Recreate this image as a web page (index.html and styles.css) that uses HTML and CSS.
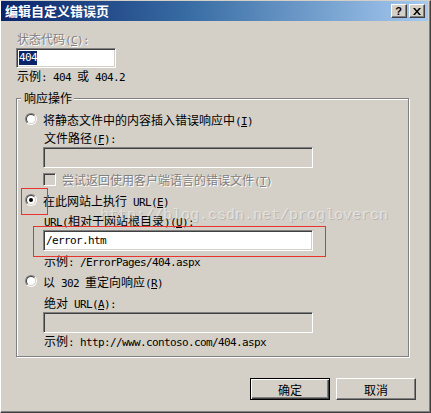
FILE: index.html
```html
<!DOCTYPE html>
<html>
<head>
<meta charset="utf-8">
<link rel="stylesheet" href="styles.css">
</head>
<body>
<div class="window">
  <div class="titlebar">
    <span class="title">编辑自定义错误页</span>
    <div class="caption-btns">
      <span class="cbtn help">?</span>
      <span class="cbtn close"><svg width="8" height="7" viewBox="0 0 8 7"><path d="M0 0h2l2 2.5 2-2.5h2l-3 3.5 3 3.5h-2l-2-2.5-2 2.5h-2l3-3.5z" fill="#000"/></svg></span>
    </div>
  </div>
  <div class="content">
    <div class="line disabled">状态代码<span class="a">(<u>C</u>):</span></div>
    <div class="edit code"><span class="sel a">404</span></div>
    <div class="line ex1">示例<span class="a">: 404 </span>或<span class="a"> 404.2</span></div>

    <fieldset class="group">
      <legend>响应操作</legend>
      <div class="group-body">
        <div class="opt">
          <span class="radio"><span class="radio-in"></span></span>
          <span>将静态文件中的内容插入错误响应中<span class="a">(<u>I</u>)</span></span>
        </div>
        <div class="sub">
          <div class="line lab1">文件路径<span class="a">(<u>F</u>):</span></div>
          <div class="edit wide off"></div>
          <div class="opt chk-row">
            <span class="check"></span>
            <span class="disabled">尝试返回使用客户端语言的错误文件<span class="a">(<u>T</u>)</span></span>
          </div>
        </div>

        <div class="opt opt2">
          <span class="radio"><span class="radio-in"><span class="dot"></span></span></span>
          <span>在此网站上执行<span class="a"> URL(<u>E</u>)</span></span>
        </div>
        <div class="sub">
          <div class="line lab2"><span class="a">URL(</span>相对于网站根目录<span class="a">)(<u>U</u>):</span></div>
          <div class="edit wide val"><span class="a">/error.htm</span></div>
          <div class="line ex2">示例<span class="a">: /ErrorPages/404.aspx</span></div>
        </div>

        <div class="opt opt3">
          <span class="radio"><span class="radio-in"></span></span>
          <span>以<span class="a"> 302 </span>重定向响应<span class="a">(<u>R</u>)</span></span>
        </div>
        <div class="sub">
          <div class="line lab3">绝对<span class="a"> URL(<u>A</u>):</span></div>
          <div class="edit wide off"></div>
          <div class="line ex3">示例<span class="a">: http://www.contoso.com/404.aspx</span></div>
        </div>
      </div>
    </fieldset>

    <div class="actions">
      <button class="btn default">确定</button>
      <button class="btn">取消</button>
    </div>
  </div>

  <div class="watermark">http://blog.csdn.net/proglovercn</div>
  <div class="mark mark1"></div>
  <div class="mark mark2"></div>
</div>
</body>
</html>
```

FILE: styles.css
```css
html, body {
  margin: 0;
  padding: 0;
  background: #d4d0c8;
}

body {
  font-family: "Noto Sans CJK SC", "Noto Sans", sans-serif;
  font-size: 12px;
  color: #000;
}

.window {
  position: relative;
  width: 431px;
  height: 413px;
  box-sizing: border-box;
  background: #d4d0c8;
  border-top: 1px solid #d4d0c8;
  border-left: 1px solid #fff;
  border-right: 1px solid #404040;
  border-bottom: 1px solid #404040;
  box-shadow: inset -1px -1px 0 #808080;
  overflow: hidden;
}

.titlebar {
  height: 20px;
  margin-right: 2px;
  display: flex;
  align-items: center;
  justify-content: space-between;
  background: linear-gradient(to right, #0a246a 0%, #3a6ea5 45%, #a6caf0 100%);
}

.title {
  color: #fff;
  font-weight: bold;
  font-size: 13px;
  line-height: 20px;
  padding-left: 4px;
}

.caption-btns {
  display: flex;
  gap: 2px;
  padding-right: 3px;
}

.cbtn {
  width: 16px;
  height: 14px;
  box-sizing: border-box;
  background: #d4d0c8;
  border: 1px solid;
  border-color: #fff #404040 #404040 #fff;
  box-shadow: inset -1px -1px 0 #808080;
  display: flex;
  align-items: center;
  justify-content: center;
}

.help {
  font-family: "Liberation Sans", sans-serif;
  font-weight: bold;
  font-size: 11px;
  line-height: 12px;
  padding-right: 1px;
}

.content {
  padding: 11px 14px 0 14px;
}

.line {
  line-height: 14px;
  height: 14px;
  white-space: nowrap;
}

.a {
  font-family: "DejaVu Sans Mono", "Liberation Mono", monospace;
  font-size: 11px;
  letter-spacing: -0.62px;
}

.disabled {
  color: #808080;
  text-shadow: 1px 1px 0 #fff;
}

.content > .line.disabled {
  padding-left: 2px;
}

.edit {
  box-sizing: border-box;
  border: 1px solid;
  border-color: #808080 #fff #fff #808080;
  box-shadow: inset 1px 1px 0 #404040, inset -1px -1px 0 #d4d0c8;
  background: #fff;
  display: flex;
  align-items: center;
  padding-left: 2px;
}

.code {
  width: 100px;
  height: 20px;
  margin-top: 2px;
  margin-left: 1px;
}

.sel {
  background: #0a246a;
  color: #fff;
  line-height: 14px;
}

.ex1 {
  margin-top: 1px;
  padding-left: 2px;
}

.group {
  margin: 8px 7px 0 1px;
  padding: 0;
  border: 1px solid #808080;
  box-shadow: 1px 1px 0 #fff, inset 1px 1px 0 #fff;
  min-width: 0;
}

.group legend {
  margin-left: 4px;
  padding: 0 2px 0 3px;
  line-height: 14px;
  background: #d4d0c8;
}

.group-body {
  padding: 7px 0 8px 8px;
}

.opt {
  display: flex;
  align-items: center;
  gap: 6px;
  height: 14px;
  white-space: nowrap;
}

.radio {
  width: 12px;
  height: 12px;
  box-sizing: border-box;
  border-radius: 50%;
  border: 1px solid;
  border-color: #808080 #fff #fff #808080;
  transform: rotate(0deg);
  display: flex;
}

.radio-in {
  flex: 1;
  border-radius: 50%;
  border: 1px solid;
  border-color: #404040 #d4d0c8 #d4d0c8 #404040;
  background: #fff;
  display: flex;
  align-items: center;
  justify-content: center;
}

.dot {
  width: 4px;
  height: 4px;
  border-radius: 50%;
  background: #000;
}

.sub {
  padding-left: 18px;
}

.lab1 {
  margin-top: 5px;
  padding-left: 1px;
}

.lab2 {
  margin-top: 7px;
  padding-left: 1px;
}

.lab3 {
  margin-top: 8px;
  padding-left: 1px;
}

.wide {
  width: 270px;
  height: 21px;
  margin-top: 2px;
}

.off {
  background: #d4d0c8;
}

.chk-row {
  margin-top: 4px;
}

.check {
  width: 13px;
  height: 13px;
  box-sizing: border-box;
  border: 1px solid;
  border-color: #808080 #fff #fff #808080;
  box-shadow: inset 1px 1px 0 #404040, inset -1px -1px 0 #d4d0c8;
  background: #d4d0c8;
}

.opt2 {
  margin-top: 7px;
}

.opt3 {
  margin-top: 6px;
}

.ex2 {
  margin-top: 3px;
  padding-left: 1px;
}

.ex3 {
  margin-top: 1px;
  padding-left: 1px;
}

.actions {
  display: flex;
  justify-content: flex-end;
  gap: 6px;
  margin-top: 21px;
}

.btn {
  width: 80px;
  height: 22px;
  box-sizing: border-box;
  margin: 0;
  padding: 0;
  font-family: "Noto Sans CJK SC", sans-serif;
  font-size: 12px;
  color: #000;
  background: #d4d0c8;
  border: 1px solid;
  border-color: #fff #404040 #404040 #fff;
  box-shadow: inset -1px -1px 0 #808080;
  border-radius: 0;
}

.btn.default {
  border: 1px solid #000;
  box-shadow: inset 1px 1px 0 #fff, inset -1px -1px 0 #404040, inset -2px -2px 0 #808080;
}

.watermark {
  position: absolute;
  left: 99px;
  top: 206px;
  font-family: "Liberation Mono", monospace;
  font-size: 15px;
  line-height: 18px;
  color: rgba(255, 255, 255, 0.45);
  text-shadow: 1px 1px 0 rgba(120, 120, 120, 0.3);
  pointer-events: none;
  white-space: nowrap;
}

.mark {
  position: absolute;
  border: 1px solid #e8332e;
  box-sizing: border-box;
  pointer-events: none;
}

.mark1 {
  left: 20px;
  top: 187px;
  width: 27px;
  height: 27px;
}

.mark2 {
  left: 32px;
  top: 225px;
  width: 293px;
  height: 31px;
}
```
